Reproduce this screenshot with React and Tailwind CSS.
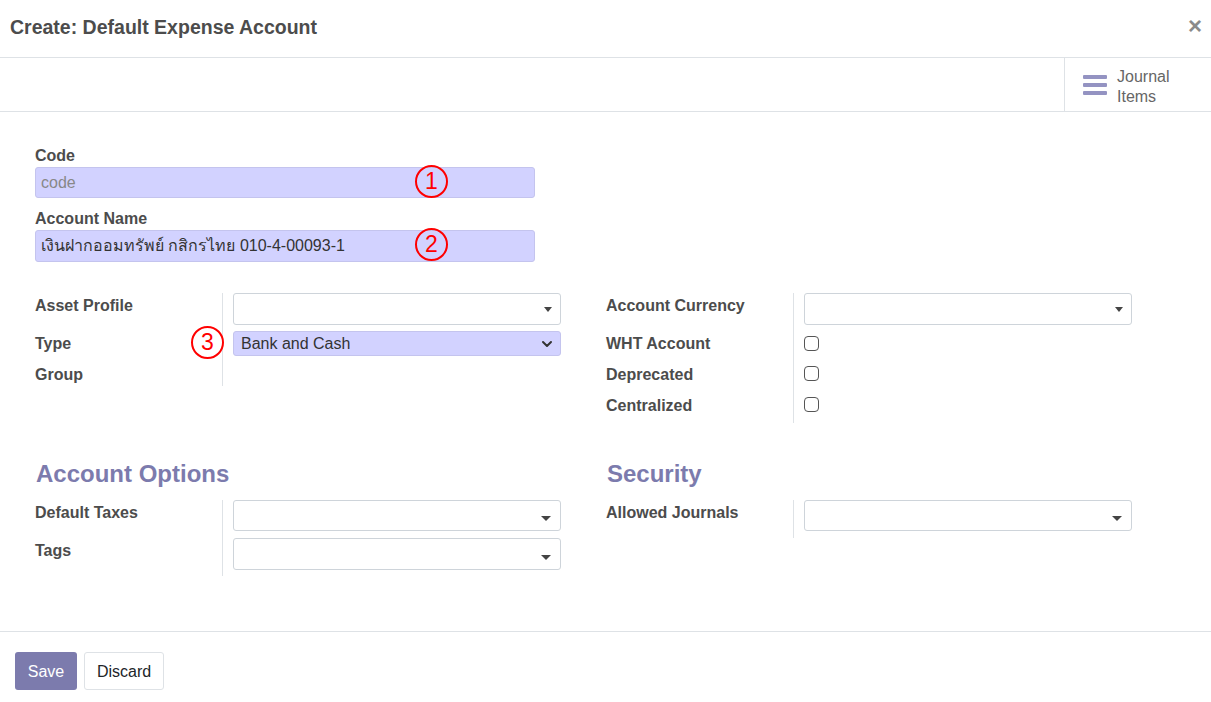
import { ChevronDown } from "lucide-react";

const FONT = "font-['Liberation_Sans','Noto_Sans','Noto_Sans_CJK_SC',sans-serif]";

function Caret({ className = "" }) {
  return (
    <span
      className={
        "block w-0 h-0 border-l-[4px] border-r-[4px] border-t-[5px] border-l-transparent border-r-transparent border-t-[#444] " +
        className
      }
    />
  );
}

function Many2One() {
  return (
    <div className="w-[328px] h-[32px] border border-[#ced4da] rounded-[3px] bg-white flex items-center justify-end pr-[8px]">
      <Caret />
    </div>
  );
}

function Many2Many({ h = "h-[31px]" }) {
  return (
    <div className={"w-[328px] border border-[#ced4da] rounded-[3px] bg-white flex items-end justify-end pr-[9px] pb-[9px] " + h}>
      <Caret className="border-t-[#222] border-l-[5px] border-r-[5px]" />
    </div>
  );
}

function Checkbox({ mt }) {
  return <div className={"w-[15px] h-[15px] rounded-[4px] border-[1.5px] border-[#555] bg-white " + mt} />;
}

function Row({ label, h, children }) {
  return (
    <div className={"flex " + h}>
      <div className="w-[187px] pt-[4px] text-[16px] leading-[18px] font-bold">{label}</div>
      <div className="flex-1 border-l border-[#dee2e6] pl-[10px]">{children}</div>
    </div>
  );
}

function Mark({ n, className }) {
  return (
    <div
      className={
        "absolute w-[33px] h-[33px] rounded-full border-2 border-[#ff0000] flex items-center justify-center text-[#ff0000] text-[23px] leading-none " +
        className
      }
    >
      {n}
    </div>
  );
}

export default function App() {
  return (
    <div className={"relative w-[1211px] h-[702px] bg-white text-[#4c4c4c] flex flex-col " + FONT}>
      {/* Header */}
      <header className="h-[58px] border-b border-[#dee2e6] flex items-center justify-between pl-[10px] pr-[9px]">
        <h4 className="text-[19.5px] font-bold leading-none mb-[1px]">Create: Default Expense Account</h4>
        <span className="text-[#8a8a8a] text-[24px] font-bold leading-none mb-[5px]">×</span>
      </header>

      {/* Button box */}
      <div className="h-[54px] border-b border-[#dee2e6] flex justify-end">
        <div className="w-[147px] border-l border-[#dee2e6] flex items-center pl-[18px] gap-[10px]">
          <svg width="24" height="20" viewBox="0 0 24 20" className="shrink-0">
            <rect x="0" y="0" width="24" height="4" rx="1" fill="#9493c2" />
            <rect x="0" y="8" width="24" height="4" rx="1" fill="#9493c2" />
            <rect x="0" y="16" width="24" height="4" rx="1" fill="#9493c2" />
          </svg>
          <div className="text-[16px] leading-[20px] text-[#666] mt-[4px]">
            <div>Journal</div>
            <div>Items</div>
          </div>
        </div>
      </div>

      {/* Form body */}
      <main className="flex-1 px-[35px] pt-[35px]">
        <div className="w-[500px]">
          <div className="text-[16px] leading-[18px] font-bold">Code</div>
          <div className="mt-[2px] h-[31px] bg-[#d2d2ff] border border-[#c4c4ee] rounded-[3px] flex items-center px-[5px] text-[16px] text-[#888]">
            code
          </div>
          <div className="mt-[12px] text-[16px] leading-[18px] font-bold">Account Name</div>
          <div className="mt-[2px] h-[32px] bg-[#d2d2ff] border border-[#c4c4ee] rounded-[3px] flex items-center px-[5px] text-[16px] text-[#333]">
            เงินฝากออมทรัพย์ กสิกรไทย 010-4-00093-1
          </div>
        </div>

        {/* Main groups */}
        <div className="mt-[31px] flex gap-[45px] items-start">
          <div className="w-[526px]">
            <Row label="Asset Profile" h="h-[38px]">
              <Many2One />
            </Row>
            <Row label="Type" h="h-[31px]">
              <div className="w-[328px] h-[25px] bg-[#d2d2ff] border border-[#c4c4ee] rounded-[3px] flex items-center justify-between pl-[7px] pr-[5px] text-[16px] text-[#333]">
                <span>Bank and Cash</span>
                <ChevronDown size={16} strokeWidth={3} color="#333" />
              </div>
            </Row>
            <Row label="Group" h="h-[24px]" />
          </div>
          <div className="w-[526px]">
            <Row label="Account Currency" h="h-[38px]">
              <Many2One />
            </Row>
            <Row label="WHT Account" h="h-[31px]">
              <Checkbox mt="mt-[5px]" />
            </Row>
            <Row label="Deprecated" h="h-[31px]">
              <Checkbox mt="mt-[4px]" />
            </Row>
            <Row label="Centralized" h="h-[30px]">
              <Checkbox mt="mt-[4px]" />
            </Row>
          </div>
        </div>

        {/* Section headings */}
        <div className="mt-[36px] flex gap-[45px]">
          <h2 className="w-[526px] h-[29px] flex items-center pl-[1px] text-[24px] font-bold text-[#7c7bad]">Account Options</h2>
          <h2 className="w-[526px] h-[29px] flex items-center pl-[1px] text-[24px] font-bold text-[#7c7bad]">Security</h2>
        </div>

        <div className="mt-[12px] flex gap-[45px] items-start">
          <div className="w-[526px]">
            <Row label="Default Taxes" h="h-[38px]">
              <Many2Many h="h-[31px]" />
            </Row>
            <Row label="Tags" h="h-[38px]">
              <Many2Many h="h-[32px]" />
            </Row>
          </div>
          <div className="w-[526px]">
            <Row label="Allowed Journals" h="h-[38px]">
              <Many2Many h="h-[31px]" />
            </Row>
          </div>
        </div>
      </main>

      {/* Footer */}
      <footer className="h-[71px] border-t border-[#dee2e6] pt-[20px] pl-[15px] flex gap-[7px] items-start">
        <button type="button" className="w-[62px] h-[38px] pt-[2px] rounded-[3px] bg-[#7c7bad] text-white text-[16px]">
          Save
        </button>
        <button type="button" className="w-[80px] h-[38px] pt-[2px] rounded-[3px] bg-white border border-[#dee2e6] text-[#212529] text-[16px]">
          Discard
        </button>
      </footer>

      {/* Annotation marks */}
      <Mark n="1" className="left-[415px] top-[165px]" />
      <Mark n="2" className="left-[415px] top-[228px]" />
      <Mark n="3" className="left-[191px] top-[326px]" />
    </div>
  );
}
